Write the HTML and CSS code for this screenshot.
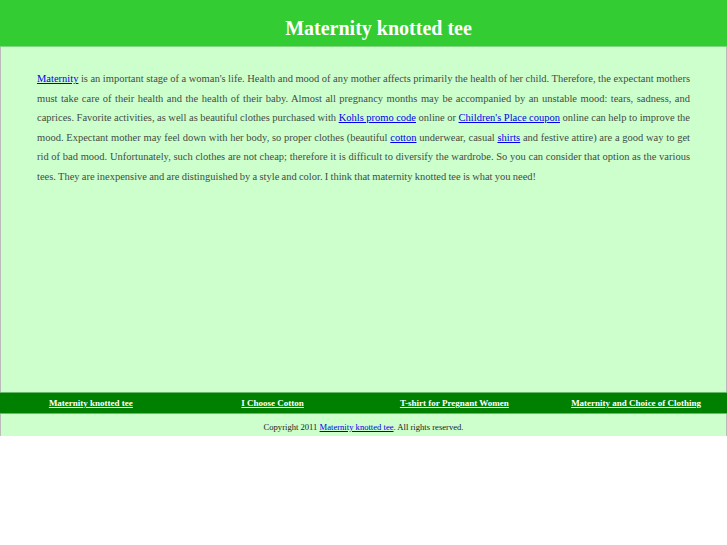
FILE: index.html
```html
<!DOCTYPE html>
<html>
<head>
<meta charset="utf-8">
<title>Maternity knotted tee</title>
<link rel="stylesheet" href="styles.css">
</head>
<body>
<div class="page">
  <div class="header"><h1>Maternity knotted tee</h1></div>
  <div class="content">
    <p><a href="#">Maternity</a> is an important stage of a woman's life. Health and mood of any mother affects primarily the health of her child. Therefore, the expectant mothers must take care of their health and the health of their baby. Almost all pregnancy months may be accompanied by an unstable mood: tears, sadness, and caprices. Favorite activities, as well as beautiful clothes purchased with <a href="#">Kohls promo code</a> online or <a href="#">Children's Place coupon</a> online can help to improve the mood. Expectant mother may feel down with her body, so proper clothes (beautiful <a href="#">cotton</a> underwear, casual <a href="#">shirts</a> and festive attire) are a good way to get rid of bad mood. Unfortunately, such clothes are not cheap; therefore it is difficult to diversify the wardrobe. So you can consider that option as the various tees. They are inexpensive and are distinguished by a style and color. I think that maternity knotted tee is what you need!</p>
  </div>
  <div class="nav">
    <div class="nav-cell"><a href="#">Maternity knotted tee</a></div>
    <div class="nav-cell"><a href="#">I Choose Cotton</a></div>
    <div class="nav-cell"><a href="#">T-shirt for Pregnant Women</a></div>
    <div class="nav-cell"><a href="#">Maternity and Choice of Clothing</a></div>
  </div>
  <div class="footer">Copyright 2011 <a href="#">Maternity knotted tee</a>. All rights reserved.</div>
</div>
</body>
</html>
```

FILE: styles.css
```css
html, body {
  margin: 0;
  padding: 0;
  background: #ffffff;
  font-family: "Liberation Serif", "Times New Roman", serif;
}
.page {
  width: 727px;
}
.header {
  background: #33cc33;
  height: 46px;
  border-bottom: 1px solid #7fd87f;
  display: flex;
  align-items: center;
  justify-content: center;
  padding-left: 30px;
}
.header h1 {
  margin: 0;
  color: #ffffff;
  font-size: 20px;
  font-weight: bold;
  padding-top: 10px;
}
.content {
  background: #ccffcc;
  border-left: 1px solid #bbbbbb;
  border-right: 1px solid #bbbbbb;
  height: 345px;
  padding: 0 36px;
}
.content p {
  margin: 0;
  padding-top: 22px;
  font-size: 10.5px;
  line-height: 19.6px;
  color: #444c44;
  text-align: justify;
  word-spacing: -0.4px;
}
.content a {
  color: #0000ee;
}
.nav {
  background: #008000;
  border-top: 1px solid #66bb66;
  border-bottom: 1px solid #66bb66;
  height: 20px;
  display: grid;
  grid-template-columns: repeat(4, 1fr);
  align-items: center;
}
.nav-cell {
  text-align: center;
  font-size: 9px;
  font-weight: bold;
}
.nav-cell a {
  color: #ffffff;
}
.footer {
  background: #ccffcc;
  border-left: 1px solid #bbbbbb;
  border-right: 1px solid #bbbbbb;
  height: 22px;
  line-height: 26px;
  text-align: center;
  font-size: 8.6px;
  color: #222222;
}
.footer a {
  color: #0000ee;
}
```
